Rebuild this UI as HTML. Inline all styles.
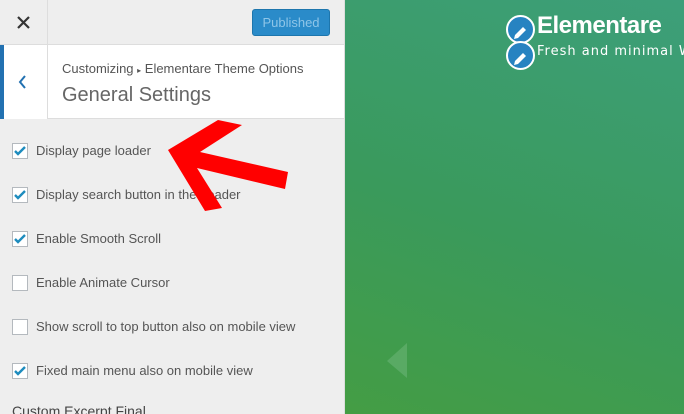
<!DOCTYPE html>
<html><head><style>
*{margin:0;padding:0;box-sizing:border-box}
html,body{width:684px;height:414px;overflow:hidden}
body{font-family:"Liberation Sans",sans-serif;position:relative;background:#eee}
#panel{position:absolute;left:0;top:0;width:345px;height:414px;background:#eee;border-right:1px solid #ddd;overflow:hidden}
#top{position:absolute;left:0;top:0;width:345px;height:45px;background:#eee;border-bottom:1px solid #ddd}
#close{position:absolute;left:0;top:0;width:48px;height:45px;border-right:1px solid #ddd}
#pub{position:absolute;left:252px;top:9px;width:78px;height:27px;background:#2a8bc9;border-radius:3px;color:#8ec5e8;font-size:13px;text-align:center;line-height:25px;border:1px solid #1d76ad}
#sec{position:absolute;left:0;top:45px;width:345px;height:74px;background:#fff;border-bottom:1px solid #ddd}
#back{position:absolute;left:0;top:0;width:48px;height:74px;background:#fff;border-left:4px solid #2271b1;border-right:1px solid #ddd}
#crumb{position:absolute;left:62px;top:16px;font-size:13px;color:#555}
#title{position:absolute;left:62px;top:39px;font-size:20px;color:#666}
.row{position:absolute;left:12px;font-size:13px;color:#555;height:16px;line-height:16px}
.cb{position:absolute;left:0;top:0;width:16px;height:16px;border:1px solid #b4b9be;background:#fff}
.row span{position:absolute;left:24px;top:0;white-space:nowrap}
#prev{position:absolute;left:345px;top:0;width:339px;height:414px;background:linear-gradient(200deg,#3d9f7a 0%,#3a9a5c 55%,#449d44 100%)}
.pen{position:absolute;width:29px;height:29px;border-radius:50%;background:#2783c1;border:2px solid #fff}
</style></head><body>
<div id="panel">
<div id="top"><div id="close"><svg width="48" height="45"><path d="M18 17l11 11M29 17l-11 11" stroke="#333" stroke-width="2.2"/></svg></div><div id="pub">Published</div></div>
<div id="sec"><div id="back"><svg width="44" height="74"><path d="M21 31l-5 6 5 6" stroke="#2271b1" stroke-width="2" fill="none"/></svg></div>
<div id="crumb">Customizing <span style="font-size:8px">▸</span> Elementare Theme Options</div>
<div id="title">General Settings</div></div>
<div class="row" style="top:143px"><div class="cb"><svg width="14" height="14" viewBox="0 0 14 14"><path d="M2 7l3 3 7-7" stroke="#1e8cbe" stroke-width="2.4" fill="none"/></svg></div><span>Display page loader</span></div>
<div class="row" style="top:187px"><div class="cb"><svg width="14" height="14" viewBox="0 0 14 14"><path d="M2 7l3 3 7-7" stroke="#1e8cbe" stroke-width="2.4" fill="none"/></svg></div><span>Display search button in the header</span></div>
<div class="row" style="top:231px"><div class="cb"><svg width="14" height="14" viewBox="0 0 14 14"><path d="M2 7l3 3 7-7" stroke="#1e8cbe" stroke-width="2.4" fill="none"/></svg></div><span>Enable Smooth Scroll</span></div>
<div class="row" style="top:275px"><div class="cb"></div><span>Enable Animate Cursor</span></div>
<div class="row" style="top:319px"><div class="cb"></div><span>Show scroll to top button also on mobile view</span></div>
<div class="row" style="top:363px"><div class="cb"><svg width="14" height="14" viewBox="0 0 14 14"><path d="M2 7l3 3 7-7" stroke="#1e8cbe" stroke-width="2.4" fill="none"/></svg></div><span>Fixed main menu also on mobile view</span></div>
<div style="position:absolute;left:12px;top:403px;font-size:14px;color:#444">Custom Excerpt Final</div>
<svg style="position:absolute;left:0;top:0" width="345" height="414"><polygon points="168,150 218,120 242,125 200,152 288,172 285,189 197,168 222,208 205,211" fill="#f00"/></svg>
</div>
<div id="prev">
<svg style="position:absolute;left:42px;top:343px" width="22" height="36"><polygon points="20,0 20,35 0,18" fill="#5fae6a" opacity=".8"/></svg>
<div class="pen" style="left:161px;top:15px"></div>
<div class="pen" style="left:161px;top:41px"></div>
<div style="position:absolute;left:192px;top:12px;font-size:24px;font-weight:bold;color:#fff;letter-spacing:-0.5px">Elementare</div>
<div style="position:absolute;left:192px;top:44px;font-size:13px;color:#fff;letter-spacing:1px;font-family:'DejaVu Sans',sans-serif;white-space:nowrap">Fresh and minimal Wo</div>
</div>
<svg style="position:absolute;left:506px;top:15px" width="30" height="60"><g fill="#fff"><path d="M9 20l8-8 3 3-8 8-4 1z"/><path d="M9 46l8-8 3 3-8 8-4 1z"/></g></svg>
</body></html>
